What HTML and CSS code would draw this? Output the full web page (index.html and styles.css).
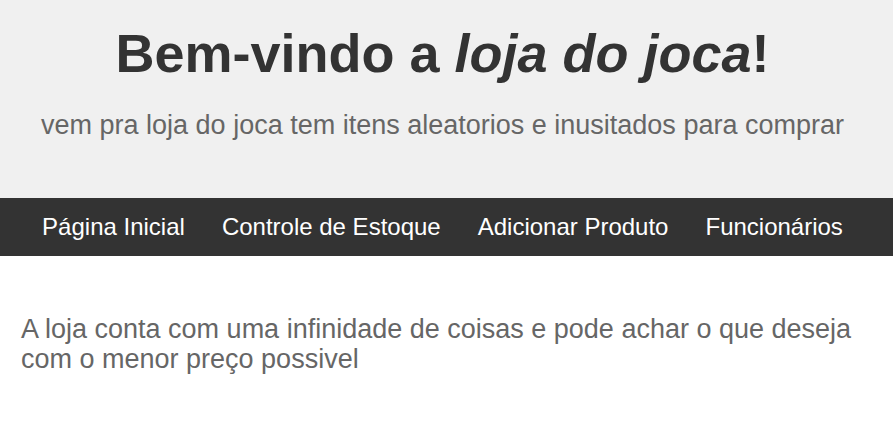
FILE: index.html
```html
<!DOCTYPE html>
<html lang="pt">
<head>
<meta charset="utf-8">
<title>Loja do Joca</title>
<link rel="stylesheet" href="styles.css">
</head>
<body>
<header class="site-header">
  <h1 class="title">Bem-vindo a <em>loja do joca</em>!</h1>
  <p class="subtitle">vem pra loja do joca tem itens aleatorios e inusitados para comprar</p>
</header>
<nav class="nav">
  <a class="nav-link" href="#">Página Inicial</a>
  <a class="nav-link" href="#">Controle de Estoque</a>
  <a class="nav-link" href="#">Adicionar Produto</a>
  <a class="nav-link" href="#">Funcionários</a>
</nav>
<main class="content">
  <p class="intro">A loja conta com uma infinidade de coisas e pode achar o que deseja com o menor preço possivel</p>
</main>
</body>
</html>
```
FILE: styles.css
```css
body {
  margin: 0;
  font-family: "Liberation Sans", Arial, sans-serif;
  background: #fff;
}
.site-header {
  background: #f0f0f0;
  text-align: center;
  padding: 22px 28px 57px 20px;
}
.title {
  margin: 0;
  font-size: 54px;
  font-weight: bold;
  color: #333;
}
.subtitle {
  margin: 26px 0 0;
  font-size: 27px;
  color: #666;
}
.nav {
  background: #333;
  display: flex;
  justify-content: center;
  align-items: center;
  gap: 37px;
  height: 58px;
  padding-right: 8px;
}
.nav-link {
  color: #fff;
  text-decoration: none;
  font-size: 24px;
}
.content {
  padding: 58px 21px 40px;
}
.intro {
  margin: 0;
  font-size: 27px;
  line-height: 30px;
  color: #666;
}
```
